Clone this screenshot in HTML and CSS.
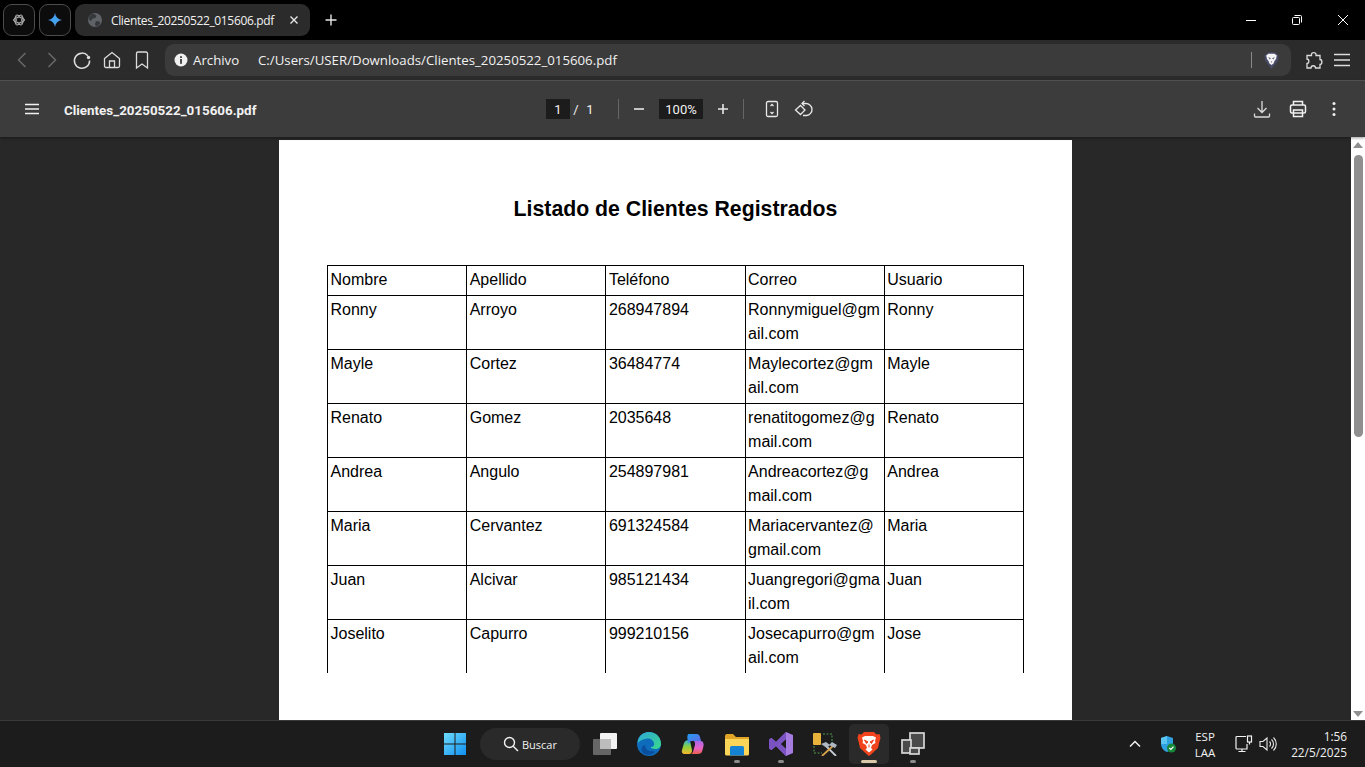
FILE: index.html
```html
<!DOCTYPE html>
<html lang="es">
<head>
  <meta charset="UTF-8">
  <title>Clientes_20250522_015606.pdf</title>
  <link rel="stylesheet" href="styles.css">
</head>
<body>
  <!-- tab strip -->
  <div class="tabstrip">
    <div class="pinned">
      <svg class="ico16" viewBox="0 0 16 16" fill="none" stroke="#b4b4b4" stroke-width=".8">
        <ellipse cx="8" cy="8" rx="5.6" ry="2.7"/>
        <ellipse cx="8" cy="8" rx="5.6" ry="2.7" transform="rotate(60 8 8)"/>
        <ellipse cx="8" cy="8" rx="5.6" ry="2.7" transform="rotate(120 8 8)"/>
        <circle cx="8" cy="8" r="4.6"/>
      </svg>
    </div>
    <div class="pinned">
      <svg class="ico16" viewBox="0 0 16 16">
        <defs>
          <linearGradient id="gem" x1="0" y1="0" x2="1" y2="1">
            <stop offset="0" stop-color="#4f8df5"/>
            <stop offset="0.55" stop-color="#3ea6ee"/>
            <stop offset="1" stop-color="#9a6fe0"/>
          </linearGradient>
        </defs>
        <path d="M8 1C8.6 5 11 7.4 15 8 11 8.6 8.6 11 8 15 7.4 11 5 8.6 1 8 5 7.4 7.4 5 8 1Z" fill="url(#gem)"/>
      </svg>
    </div>
    <div class="tab">
      <svg class="ico16" viewBox="0 0 16 16">
        <circle cx="8" cy="8" r="7" fill="#5f6368"/>
        <path d="M6 1.600 9.500 3.500 8.500 6 5.500 6.500 4 9 1.800 7.500C1.800 4.800 3.500 2.500 6 1.600ZM9 9l3.500.5.8 1.500C12.400 13 10.600 14.200 8.800 14.500L8 12Z" fill="#35383b"/>
      </svg>
      <span class="tab-title">Clientes_20250522_015606.pdf</span>
      <svg class="tab-close" viewBox="0 0 10 10" stroke="#e6e6e6" stroke-width="1.4"><path d="M1.500 1.500l7 7M8.500 1.500l-7 7"/></svg>
    </div>
    <svg class="new-tab" viewBox="0 0 12 12" stroke="#e6e6e6" stroke-width="1.4"><path d="M6 .5v11M.5 6h11"/></svg>
    <div class="win-btns">
      <svg viewBox="0 0 12 12" stroke="#fff" fill="none"><path d="M1 6.500h10"/></svg>
      <svg viewBox="0 0 12 12" stroke="#fff" fill="none"><rect x="1.500" y="3.500" width="7" height="7" rx="1"/><path d="M3.500 1.500h6a1 1 0 0 1 1 1v6"/></svg>
      <svg viewBox="0 0 12 12" stroke="#fff" fill="none"><path d="M1 1l10 10M11 1L1 11"/></svg>
    </div>
  </div>

  <!-- address bar row -->
  <div class="navbar">
    <div class="nav-btns">
      <svg viewBox="0 0 20 20" fill="none" stroke="#686868" stroke-width="1.5"><path d="M13.500 3 6.500 10l7 7"/></svg>
      <svg viewBox="0 0 20 20" fill="none" stroke="#686868" stroke-width="1.5"><path d="M6.500 3l7 7-7 7"/></svg>
      <svg viewBox="0 0 20 20" fill="none" stroke="#dcdcdc" stroke-width="1.5"><path d="M15.800 5.800A7.600 7.600 0 1 0 17.600 10.500"/><circle cx="16.500" cy="7.500" r="1.700" fill="#dcdcdc" stroke="none"/></svg>
      <svg viewBox="0 0 20 20" fill="none" stroke="#dcdcdc" stroke-width="1.3"><path d="M2.500 8.500 10 2.500l7.500 6V16a1.500 1.500 0 0 1-1.500 1.500H4A1.500 1.500 0 0 1 2.500 16Z"/><path d="M7.500 17.500V11h5v6.500"/></svg>
      <svg viewBox="0 0 20 20" fill="none" stroke="#dcdcdc" stroke-width="1.3"><path d="M4.500 3.500a1.500 1.500 0 0 1 1.500-1.500h8a1.500 1.500 0 0 1 1.500 1.500V18L10 14l-5.500 4Z"/></svg>
    </div>
    <div class="omnibox">
      <svg class="info" viewBox="0 0 14 14"><circle cx="7" cy="7" r="6.500" fill="#f0f0f0"/><rect x="6.100" y="6" width="1.800" height="4.800" fill="#3b3b3b"/><rect x="6.100" y="3.200" width="1.800" height="1.800" fill="#3b3b3b"/></svg>
      <span class="scheme">Archivo</span>
      <span class="url">C:/Users/USER/Downloads/Clientes_20250522_015606.pdf</span>
      <span class="omni-sep"></span>
      <svg class="shield" viewBox="0 0 15 17">
        <path d="M7.500 0 11.500 .8 14.500 3.500 14 8.500 7.500 17 1 8.500 .5 3.500 3.500 .8Z" fill="#474b66"/>
        <path d="M4.500 1.800H10.500L12.800 3.500 12 7 10.500 9 9.500 11.500 7.500 13 5.500 11.500 4.500 9 3 7 2.200 3.500Z" fill="#f4f4f4"/>
        <path d="M4.300 5 6.800 6.300 5.800 7.600ZM10.700 5 8.200 6.300 9.200 7.600ZM6.700 9.500H8.300L7.500 10.800Z" fill="#474b66"/>
      </svg>
    </div>
    <svg class="nav-ext" viewBox="0 0 20 20" fill="none" stroke="#dcdcdc" stroke-width="1.3"><path d="M7.500 4.500C7.500 2 12 2 12 4.500V5.500H16V9.500C18.500 9.500 18.500 14.500 16 14.500V18H11.500C11.500 15 7 15 7 18H3V13.500C5.500 13.500 5.500 9 3 9V5.500H7.500Z"/></svg>
    <svg class="nav-menu" viewBox="0 0 18 14" stroke="#dcdcdc" stroke-width="1.5"><path d="M1 1.500h16M1 7h16M1 12.500h16"/></svg>
  </div>

  <!-- pdf viewer toolbar -->
  <div class="pdf-bar">
    <svg class="pdf-ham" viewBox="0 0 16 12" stroke="#f1f1f1" stroke-width="1.5"><path d="M1 1.500h14M1 6h14M1 10.500h14"/></svg>
    <span class="pdf-title">Clientes_20250522_015606.pdf</span>
    <div class="pdf-mid">
      <span class="num-box page-box">1</span>
      <span class="slash">/</span>
      <span class="page-total">1</span>
      <span class="pdf-sep sep-page"></span>
      <svg class="pdf-ico" viewBox="0 0 20 20" stroke="#e8e8e8" stroke-width="1.6"><path d="M5 10h10"/></svg>
      <span class="num-box zoom-box">100%</span>
      <svg class="pdf-ico" viewBox="0 0 20 20" stroke="#e8e8e8" stroke-width="1.6"><path d="M5 10h10M10 5v10"/></svg>
      <span class="pdf-sep sep-zoom"></span>
      <svg class="pdf-ico" viewBox="0 0 20 20" fill="none" stroke="#e8e8e8" stroke-width="1.3"><rect x="4.500" y="2.500" width="11" height="15" rx="1.500"/><path d="M8.500 7 10 5.500 11.500 7M8.500 13 10 14.500 11.500 13"/></svg>
      <svg class="pdf-ico rotate-ico" viewBox="0 0 20 20" fill="none" stroke="#e8e8e8" stroke-width="1.3"><path d="M1.500 11 6.500 6.500 11 11 6.500 15.500Z"/><path d="M8 4.500h3.500a6 6 0 0 1 1 12H9"/><path d="M10.500 2 8 4.500 10.500 7"/></svg>
    </div>
    <div class="pdf-right">
      <svg class="pdf-ico" viewBox="0 0 20 20" fill="none" stroke="#dcdcdc" stroke-width="1.3"><path d="M10 2v11M5.500 9l4.500 4.500L14.500 9"/><path d="M2.500 14.500V17a1 1 0 0 0 1 1h13a1 1 0 0 0 1-1v-2.500"/></svg>
      <svg class="pdf-ico" viewBox="0 0 20 20" fill="none" stroke="#f1f1f1" stroke-width="1.5"><path d="M5.500 6V2.500h9V6"/><rect x="2.500" y="6" width="15" height="8" rx="1.500"/><rect x="5.500" y="11" width="9" height="6.500"/></svg>
      <svg class="pdf-ico" viewBox="0 0 20 20" fill="#f1f1f1"><circle cx="10" cy="4.500" r="1.500"/><circle cx="10" cy="10" r="1.500"/><circle cx="10" cy="15.500" r="1.500"/></svg>
    </div>
  </div>

  <!-- document area -->
  <div class="viewer">
    <div class="pages">
      <div class="paper">
        <h1 class="doc-title">Listado de Clientes Registrados</h1>
        <div class="table-clip">
          <table class="clients">
            <thead>
              <tr><td>Nombre</td><td>Apellido</td><td>Teléfono</td><td>Correo</td><td>Usuario</td></tr>
            </thead>
            <tbody>
              <tr><td>Ronny</td><td>Arroyo</td><td>268947894</td><td>Ronnymiguel@gmail.com</td><td>Ronny</td></tr>
              <tr><td>Mayle</td><td>Cortez</td><td>36484774</td><td>Maylecortez@gmail.com</td><td>Mayle</td></tr>
              <tr><td>Renato</td><td>Gomez</td><td>2035648</td><td>renatitogomez@gmail.com</td><td>Renato</td></tr>
              <tr><td>Andrea</td><td>Angulo</td><td>254897981</td><td>Andreacortez@gmail.com</td><td>Andrea</td></tr>
              <tr><td>Maria</td><td>Cervantez</td><td>691324584</td><td>Mariacervantez@gmail.com</td><td>Maria</td></tr>
              <tr><td>Juan</td><td>Alcivar</td><td>985121434</td><td>Juangregori@gmail.com</td><td>Juan</td></tr>
              <tr><td>Joselito</td><td>Capurro</td><td>999210156</td><td>Josecapurro@gmail.com</td><td>Jose</td></tr>
            </tbody>
          </table>
        </div>
      </div>
    </div>
    <div class="scrollbar">
      <span class="arrow-up"></span>
      <span class="thumb"></span>
      <span class="arrow-down"></span>
    </div>
  </div>

  <!-- windows taskbar -->
  <div class="taskbar">
    <div class="task-center">
      <div class="task-item">
        <svg class="ico24" viewBox="0 0 24 24">
          <defs>
            <linearGradient id="win" x1="0" y1="0" x2="1" y2="1">
              <stop offset="0" stop-color="#6fdcfb"/>
              <stop offset="1" stop-color="#0f8ff0"/>
            </linearGradient>
          </defs>
          <path d="M1 1h10.500v10.500H1ZM12.500 1H23v10.500H12.500ZM1 12.500h10.500V23H1ZM12.500 12.500H23V23H12.500Z" fill="url(#win)"/>
        </svg>
      </div>
      <div class="search-pill">
        <svg class="ico16" viewBox="0 0 16 16" fill="none" stroke="#f2f2f2" stroke-width="1.4"><circle cx="6.500" cy="6.500" r="5"/><path d="M10.200 10.200 15 15"/></svg>
        <span>Buscar</span>
      </div>
      <div class="task-item task-view">
        <svg class="ico24" viewBox="0 0 24 24">
          <rect x="7" y="1" width="17" height="16" rx="1" fill="#f2f2f2"/>
          <rect x="0" y="7" width="18" height="16" rx="1" fill="#6d6d6d" opacity=".92"/>
          <rect x="7" y="7" width="11" height="10" fill="#bdbdbd"/>
        </svg>
      </div>
      <div class="task-item">
        <svg class="ico24" viewBox="0 0 24 24">
          <defs>
            <linearGradient id="edge1" x1="0" y1="0" x2="1" y2="1">
              <stop offset="0" stop-color="#2fa8d8"/>
              <stop offset="1" stop-color="#38d98a"/>
            </linearGradient>
          </defs>
          <circle cx="12" cy="12" r="12" fill="#0f6cbd"/>
          <path d="M1 8C3 2 8 0 12 0c7 0 12 5 12 12 0 3-2.500 5-6 5-2.500 0-4-1-4.500-2 3 0 4-1.500 3.500-4C16 7.500 13 6 10 6.500 5.500 7 2.500 9 1 11Z" fill="url(#edge1)"/>
          <path d="M8 13c0 4 4 7 8 6l2 1c-3 3-9 4-12 1-2.500-3-2-7 2-8Z" fill="#0a4f9e"/>
        </svg>
      </div>
      <div class="task-item">
        <svg class="ico24" viewBox="0 0 24 24">
          <defs>
            <linearGradient id="cop1" x1="0" y1="0" x2="1" y2="1">
              <stop offset="0" stop-color="#1f9df0"/>
              <stop offset="1" stop-color="#6f63e8"/>
            </linearGradient>
            <linearGradient id="cop2" x1="0" y1="0" x2="0" y2="1">
              <stop offset="0" stop-color="#2fb4d8"/>
              <stop offset="0.5" stop-color="#8ed13b"/>
              <stop offset="1" stop-color="#f7b52e"/>
            </linearGradient>
            <linearGradient id="cop3" x1="0" y1="0" x2="0" y2="1">
              <stop offset="0" stop-color="#a868e8"/>
              <stop offset="0.55" stop-color="#e763c8"/>
              <stop offset="1" stop-color="#f0604a"/>
            </linearGradient>
          </defs>
          <path d="M13 9h6.500c2.500 0 3.500 2 3 5l-1 4c-.5 3-2.500 4-5 4H9c2 0 3-1.500 3.500-4L14 13c.3-2-.2-3-1-4Z" fill="url(#cop3)"/>
          <path d="M7.500 8c1 0 1.500 1 2 3l1.500 7c.3 2-1 4-3 4H4c-3 0-3.500-2-3-4L3 11c.5-2 3-3 4.500-3Z" fill="url(#cop2)"/>
          <path d="M8 2h7.500c2 0 3 1 3.500 3L20 9h-9C9 9 8.300 10 7.800 12L6.500 7C6 4 6.500 2 8 2Z" fill="url(#cop1)"/>
        </svg>
      </div>
      <div class="task-item is-open">
        <svg class="ico24" viewBox="0 0 24 24">
          <path d="M0 4a2 2 0 0 1 2-2h6l3 3h13v17H0Z" fill="#e0a526"/>
          <path d="M0 7h24v15a1.500 1.500 0 0 1-1.500 1.500h-21A1.500 1.500 0 0 1 0 22Z" fill="#fbd557"/>
          <path d="M5 15.500a1.500 1.500 0 0 1 1.500-1.500h11a1.500 1.500 0 0 1 1.500 1.500V23.500H5Z" fill="#1583d4"/>
        </svg>
      </div>
      <div class="task-item is-open">
        <svg class="ico24" viewBox="0 0 24 24">
          <path d="M17 0 24 3V21L17 24 7 14 2.500 18 0 16.500V7.500L2.500 6 7 10ZM17 7 11.500 12 17 17Z" fill="#a67ce0"/>
          <path d="M17 0 7 10 2.500 6 0 7.500V16.500L2.500 18 7 14 17 24V17L11.500 12 17 7Z" fill="#7b52c2"/>
        </svg>
      </div>
      <div class="task-item">
        <svg class="ico24" viewBox="0 0 24 24" fill="none">
          <rect x="0" y="1" width="8" height="12" rx="1" fill="#e8b33a"/>
          <path d="M10 2h9v9M1 14v7h8" stroke="#4d9a4d" stroke-dasharray="2 1.500"/>
          <path d="M11 12l12 12" stroke="#c5cdd6" stroke-width="1.800"/>
          <path d="M21 13 9 24" stroke="#d8a24a" stroke-width="1.800"/>
          <path d="M8 12l5-2 4 3-3 3ZM16 13l3-3 5 3-2 3Z" fill="#aeb7c2"/>
        </svg>
      </div>
      <div class="task-item is-active">
        <svg class="ico24" viewBox="0 0 24 24">
          <path d="M7 0h10l2.500 2.500L22.500 2 23.500 6 22.500 9.500 21 16 14 22.500 12 24 10 22.500 3 16 1.500 9.500 .5 6 1.500 2 4.500 2.500Z" fill="#f1441d"/>
          <path d="M8 4h8l3 1.500L18 9l.5 2-3.500 2-1 3 1.500 1.500L12 20.500 8.500 17.500 10 16 9 13 5.500 11 6 9 5 5.500Z" fill="#fff"/>
          <path d="M7.500 8 11 10 9.500 11.500ZM16.500 8 13 10 14.500 11.500ZM12 12.500v3" stroke="#f1441d" fill="#f1441d"/>
        </svg>
      </div>
      <div class="task-item is-open">
        <svg class="ico24" viewBox="0 0 24 24" fill="#4b4b4b" stroke="#d8d8d8" stroke-width="1.7">
          <rect x="9" y="1" width="14" height="15"/>
          <rect x="1" y="8" width="9" height="13"/>
          <rect x="9" y="16" width="9" height="6"/>
        </svg>
      </div>
    </div>
    <div class="tray">
      <svg class="tray-chev" viewBox="0 0 12 8" fill="none" stroke="#f2f2f2" stroke-width="1.5"><path d="M1 6.500 6 1.500l5 5"/></svg>
      <svg class="tray-shield" viewBox="0 0 16 17">
        <path d="M7 0 13 2V8C13 12 10 15 7 16 4 15 1 12 1 8V2Z" fill="#2f9fe0"/>
        <path d="M7 0 1 2V8H7Z" fill="#5cc6f2"/>
        <circle cx="11.500" cy="12" r="4.500" fill="#16883a"/>
        <path d="M9.300 12l1.600 1.500 2.600-2.800" fill="none" stroke="#fff" stroke-width="1.2"/>
      </svg>
      <div class="tray-lang"><span>ESP</span><span>LAA</span></div>
      <svg class="tray-net" viewBox="0 0 18 18" fill="none" stroke="#f2f2f2" stroke-width="1.2"><path d="M11 1.500H2a1 1 0 0 0-1 1V13a1 1 0 0 0 1 1h10v-5"/><path d="M7 14v2.500M3.500 16.500h7"/><rect x="12.500" y="1" width="4" height="6"/><path d="M14.500 7v2.500"/></svg>
      <svg class="tray-vol" viewBox="0 0 18 16" fill="none" stroke="#e8e8e8" stroke-width="1.1"><path d="M1 5.500h3L8 2v12L4 10.500H1Z"/><path d="M10.500 5.500a3.500 3.500 0 0 1 0 5M12.500 3.500a6 6 0 0 1 0 9M14.500 1.500a9 9 0 0 1 0 13"/></svg>
      <div class="tray-clock"><span>1:56</span><span>22/5/2025</span></div>
    </div>
  </div>
</body>
</html>
```

FILE: styles.css
```css
* {
  box-sizing: border-box;
}
html, body {
  margin: 0;
  padding: 0;
}
body {
  width: 1365px;
  height: 767px;
  overflow: hidden;
  display: flex;
  flex-direction: column;
  background-color: #282828;
  font-family: "Open Sans", "Noto Sans", sans-serif;
  color: #f1f1f1;
}
svg {
  display: block;
  flex: none;
}
.ico16 {
  width: 16px;
  height: 16px;
}
.ico24 {
  width: 24px;
  height: 24px;
}

/* tab strip */
.tabstrip {
  height: 40px;
  background-color: #000;
  display: flex;
  align-items: center;
  padding: 0 0 0 3px;
}
.pinned {
  width: 32px;
  height: 32px;
  margin-right: 4px;
  border: 1px solid #4c4c4c;
  border-radius: 9px;
  background-color: #0c0c0c;
  display: flex;
  align-items: center;
  justify-content: center;
}
.tab {
  width: 235px;
  height: 32px;
  background-color: #2b2b2b;
  border-radius: 9px;
  display: flex;
  align-items: center;
  padding-left: 12px;
}
.tab-title {
  margin-left: 8px;
  font-size: 12px;
  letter-spacing: -0.36px;
  width: 178px;
  white-space: nowrap;
}
.tab-close {
  width: 10px;
  height: 10px;
}
.new-tab {
  width: 12px;
  height: 12px;
  margin-left: 15px;
}
.win-btns {
  margin-left: auto;
  display: flex;
  align-items: center;
  gap: 34px;
  padding-right: 16px;
}
.win-btns svg {
  width: 12px;
  height: 12px;
}

/* address row */
.navbar {
  height: 41px;
  background-color: #2b2b2b;
  border-bottom: 1px solid #555;
  display: flex;
  align-items: center;
  padding-left: 12px;
}
.nav-btns {
  display: flex;
  gap: 10px;
  width: 153px;
}
.nav-btns svg {
  width: 20px;
  height: 20px;
}
.omnibox {
  width: 1126px;
  height: 32px;
  background-color: #3b3b3b;
  border-radius: 9px;
  display: flex;
  align-items: center;
  padding-left: 9px;
  font-size: 13.25px;
}
.info {
  width: 14px;
  height: 14px;
}
.scheme {
  margin-left: 5px;
  width: 65px;
}
.url {
  flex: 1;
  white-space: nowrap;
}
.omni-sep {
  width: 1px;
  height: 16px;
  background-color: #8a8a8a;
}
.shield {
  width: 15px;
  height: 17px;
  margin: 0 12px 0 12px;
}
.nav-ext {
  width: 20px;
  height: 20px;
  margin-left: 13px;
}
.nav-menu {
  width: 18px;
  height: 14px;
  margin-left: 9px;
}

/* pdf toolbar */
.pdf-bar {
  height: 56px;
  background-color: #3c3c3c;
  display: flex;
  align-items: center;
  padding-left: 24px;
  position: relative;
  box-shadow: 0 1px 3px rgba(0, 0, 0, 0.4);
}
.pdf-ham {
  width: 16px;
  height: 12px;
}
.pdf-title {
  margin-left: 24px;
  padding-top: 2px;
  width: 482px;
  font-family: Roboto, sans-serif;
  font-size: 13.4px;
  font-weight: 700;
  white-space: nowrap;
}
.pdf-mid {
  display: flex;
  align-items: center;
  font-family: Roboto, sans-serif;
  font-size: 13px;
}
.num-box {
  height: 20px;
  background-color: #1c1c1c;
  display: flex;
  align-items: center;
  justify-content: center;
}
.page-box {
  width: 24px;
}
.zoom-box {
  width: 44px;
  margin: 0 10px;
}
.slash {
  width: 12px;
  text-align: center;
}
.page-total {
  width: 16px;
  text-align: center;
}
.pdf-sep {
  width: 1px;
  height: 20px;
  background-color: #666;
}
.sep-page {
  margin: 0 10px 0 20px;
}
.sep-zoom {
  margin: 0 18px 0 10px;
}
.pdf-ico {
  width: 20px;
  height: 20px;
}
.rotate-ico {
  margin-left: 12px;
}
.pdf-right {
  margin-left: auto;
  display: flex;
  gap: 16px;
  padding-right: 21px;
}

/* document area */
.viewer {
  height: 583px;
  display: flex;
  background-color: #282828;
}
.pages {
  flex: 1;
  display: flex;
  justify-content: center;
  padding-top: 3px;
}
.paper {
  width: 793px;
  height: 580px;
  background-color: #fff;
  padding: 0 48px 47px;
  display: flex;
  flex-direction: column;
  font-family: "Liberation Sans", Arial, sans-serif;
  color: #000;
}
.doc-title {
  margin: 56px 0 0;
  height: 69px;
  font-size: 21.28px;
  line-height: 26px;
  font-weight: 700;
  text-align: center;
}
.table-clip {
  flex: 1;
  overflow: hidden;
}
.clients {
  width: 697px;
  table-layout: fixed;
  border-collapse: collapse;
  font-size: 16px;
  line-height: 24px;
}
.clients td {
  border: 1px solid #000;
  padding: 2px 3px 2px 2.5px;
  vertical-align: top;
  word-break: break-all;
}
.clients thead td {
  height: 30px;
}
.clients tbody td {
  height: 54px;
}
.scrollbar {
  width: 14px;
  background-color: #fff;
  display: flex;
  flex-direction: column;
  align-items: center;
}
.arrow-up {
  margin-top: 5px;
  border-left: 5px solid transparent;
  border-right: 5px solid transparent;
  border-bottom: 6px solid #8f8f8f;
}
.thumb {
  margin-top: 7px;
  width: 9px;
  height: 282px;
  border-radius: 5px;
  background-color: #8f8f8f;
}
.arrow-down {
  margin-top: auto;
  margin-bottom: 3px;
  border-left: 5px solid transparent;
  border-right: 5px solid transparent;
  border-top: 6px solid #8f8f8f;
}

/* taskbar */
.taskbar {
  height: 47px;
  background-color: #1c1c1c;
  border-top: 1px solid #3a3a3a;
  display: flex;
  align-items: center;
  padding-left: 433px;
}
.task-center {
  display: flex;
  align-items: center;
}
.task-item {
  width: 44px;
  height: 40px;
  display: flex;
  align-items: center;
  justify-content: center;
  position: relative;
  border-radius: 5px;
}
.task-view {
  width: 45px;
}
.task-item.is-open::after,
.task-item.is-active::after {
  content: "";
  position: absolute;
  bottom: 1px;
  left: 50%;
  width: 6px;
  height: 3px;
  margin-left: -3px;
  border-radius: 2px;
  background-color: #8a8a8a;
}
.task-item.is-active {
  width: 40px;
  margin: 0 2px;
  background-color: #2a2a2a;
}
.task-item.is-active::after {
  width: 16px;
  margin-left: -8px;
  background-color: #d9c9a8;
}
.search-pill {
  width: 100px;
  height: 32px;
  margin: 0 2px 0 3px;
  border-radius: 16px;
  background-color: #2a2a2a;
  display: flex;
  align-items: center;
  padding-left: 23px;
  gap: 3px;
  font-size: 11px;
}
.tray {
  position: absolute;
  left: 1128px;
  right: 18px;
  display: flex;
  align-items: center;
}
.tray-chev {
  width: 12px;
  height: 8px;
  margin-left: 1px;
}
.tray-shield {
  width: 16px;
  height: 17px;
  margin-left: 19px;
}
.tray-lang {
  width: 30px;
  margin-left: 14px;
  padding-top: 2px;
  display: flex;
  flex-direction: column;
  align-items: center;
  font-size: 11.5px;
  line-height: 16px;
}
.tray-net {
  width: 18px;
  height: 18px;
  margin-left: 15px;
}
.tray-vol {
  width: 18px;
  height: 16px;
  margin-left: 6px;
}
.tray-clock {
  margin-left: auto;
  display: flex;
  flex-direction: column;
  align-items: flex-end;
  font-size: 11.8px;
  line-height: 16px;
}
```
